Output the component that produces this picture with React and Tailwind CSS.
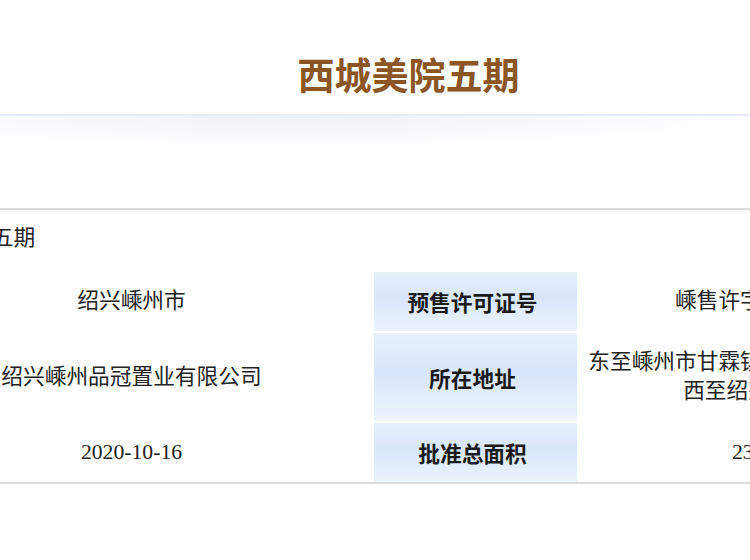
import React from "react";

const rows = [
  { v1: "绍兴嵊州市", label: "预售许可证号", v2: ["嵊售许字（2020）第105210号"] },
  {
    v1: "绍兴嵊州品冠置业有限公司",
    label: "所在地址",
    v2: ["东至嵊州市甘霖镇人民政府，南至规划道路，北", "西至绍兴嵊州品冠置业用地."],
  },
  { v1: "2020-10-16", label: "批准总面积", v2: ["23641.5806平方米"] },
];

export default function App() {
  return (
    <div
      className="w-[750px] h-[560px] overflow-hidden bg-white text-[#222]"
      style={{ fontFamily: '"Liberation Serif", "Noto Sans CJK SC", serif' }}
    >
      <div className="pt-[56px] pb-[21px] pl-[67px] flex justify-center">
        <h1
          className="text-[37px] leading-[37px] font-bold text-[#8b5524] whitespace-nowrap"
          style={{ fontFamily: '"Noto Sans CJK SC", sans-serif' }}
        >
          西城美院五期
        </h1>
      </div>
      <div className="h-[32px] border-t-2 border-[#e6edf6] bg-[radial-gradient(ellipse_60%_100%_at_40%_0%,#edf2f8_0%,#f6f8fb_55%,#ffffff_100%)]" />
      <div className="mt-[62px] border-t-2 border-b-2 border-[#dcdcdc] text-[21.7px] leading-[29px]">
        <div className="pt-[14px] ml-[-95px] whitespace-nowrap">西城美院五期</div>
        <div className="mt-[19px] ml-[-109px] flex flex-col gap-[2px]">
          {rows.map((r, i) => (
            <div key={i} className="flex gap-[2px]">
              <div className="w-[481px] shrink-0 py-[15px] text-center whitespace-nowrap flex flex-col justify-center">
                {r.v1}
              </div>
              <div
                className="w-[203px] shrink-0 py-[15px] pr-[6px] text-center font-bold text-[#1a1a1a] flex flex-col justify-center bg-[linear-gradient(180deg,#e8f0fc_0%,#d8e6fb_45%,#eef4fd_100%)]"
                style={{ fontFamily: '"Noto Sans CJK SC", sans-serif' }}
              >
                {r.label}
              </div>
              <div className="w-[474px] shrink-0 py-[15px] text-center flex flex-col justify-center">
                {r.v2.map((l, j) => (
                  <div key={j} className="whitespace-nowrap">
                    {l}
                  </div>
                ))}
              </div>
            </div>
          ))}
        </div>
      </div>
    </div>
  );
}
